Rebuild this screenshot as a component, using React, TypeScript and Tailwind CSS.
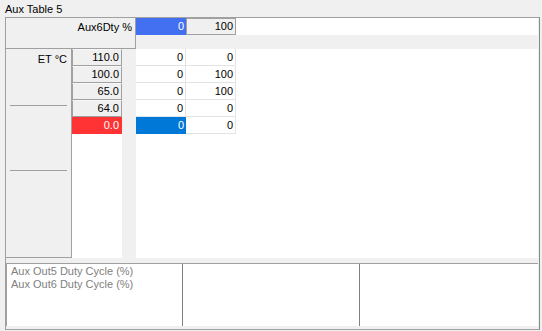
const rows = [
    { label: '110.0', a: '0', b: '0' },
    { label: '100.0', a: '0', b: '100' },
    { label: '65.0', a: '0', b: '100' },
    { label: '64.0', a: '0', b: '0' },
    { label: '0.0', a: '0', b: '0', active: true },
];

export default function App() {
    return (
        <div
            className="w-[542px] h-[331px] bg-[#f0f0f0] text-[11px] leading-[13px] text-black overflow-hidden"
            style={{ fontFamily: '"Liberation Sans", Arial, sans-serif' }}
        >
            <div className="h-[17px] pl-[5px] pt-[3px]">Aux Table 5</div>

            <div className="ml-[5px] w-[535px] h-[313px] border border-[#a0a0a0] border-r-[#888888] flex flex-col">
                {/* header */}
                <div className="flex h-[31px]">
                    <div className="w-[130px] border-r border-b border-[#a0a0a0] flex justify-end pr-[3px] pt-[3px]">
                        Aux6Dty %
                    </div>
                    <div className="flex-1 flex flex-col pr-[1px]">
                        <div className="flex h-[17px] bg-white">
                            <div className="w-[50px] bg-[#4270f0] text-white text-right pr-[2px] pt-[2px]">0</div>
                            <div className="w-[50px] bg-[#f0f0f0] border border-[#a0a0a0] text-right pr-[2px] pt-[1px]">100</div>
                            <div className="flex-1" />
                        </div>
                        <div className="h-[14px]" />
                    </div>
                </div>

                {/* body */}
                <div className="flex h-[209px]">
                    <div className="w-[66px] border-r border-b border-[#a0a0a0] flex flex-col">
                        <div className="text-right pr-[4px] pt-[4px] h-[56px]">ET °C</div>
                        <div className="mx-[4px] h-px bg-[#a0a0a0]" />
                        <div className="h-[64px]" />
                        <div className="mx-[4px] h-px bg-[#a0a0a0]" />
                    </div>
                    <div className="w-[50px] bg-white flex flex-col">
                        {rows.map((r) => (
                            <div
                                key={r.label}
                                className={
                                    r.active
                                        ? 'h-[17px] bg-[#ff3333] text-white text-right pr-[3px] pt-[2px]'
                                        : 'h-[17px] bg-[#f0f0f0] border border-t-[#f8f8f8] border-[#a0a0a0] text-right pr-[2px] pt-[1px]'
                                }
                            >
                                {r.label}
                            </div>
                        ))}
                    </div>
                    <div className="w-[14px]" />
                    <div className="flex-1 bg-white flex flex-col mr-[1px]">
                        {rows.map((r) => (
                            <div key={r.label} className="flex h-[17px]">
                                <div
                                    className={
                                        r.active
                                            ? 'w-[50px] bg-[#0078d7] text-white text-right pr-[2px] pt-[2px]'
                                            : 'w-[50px] border-r border-b border-[#e3e3e3] text-right pr-[2px] pt-[2px]'
                                    }
                                >
                                    {r.a}
                                </div>
                                <div className="w-[50px] border-r border-b border-[#e3e3e3] text-right pr-[2px] pt-[2px]">
                                    {r.b}
                                </div>
                            </div>
                        ))}
                    </div>
                </div>

                <div className="h-[5px]" />

                {/* bottom panel */}
                <div className="h-[63px] mr-[1px] bg-white border-t border-l border-[#a0a0a0] flex">
                    <div className="w-[176px] border-r border-[#808080] pl-[4px] pt-[1px] text-[#808080]">
                        <div>Aux Out5 Duty Cycle (%)</div>
                        <div>Aux Out6 Duty Cycle (%)</div>
                    </div>
                    <div className="w-[177px] border-r border-[#808080]" />
                    <div className="flex-1" />
                </div>
            </div>
        </div>
    );
}
